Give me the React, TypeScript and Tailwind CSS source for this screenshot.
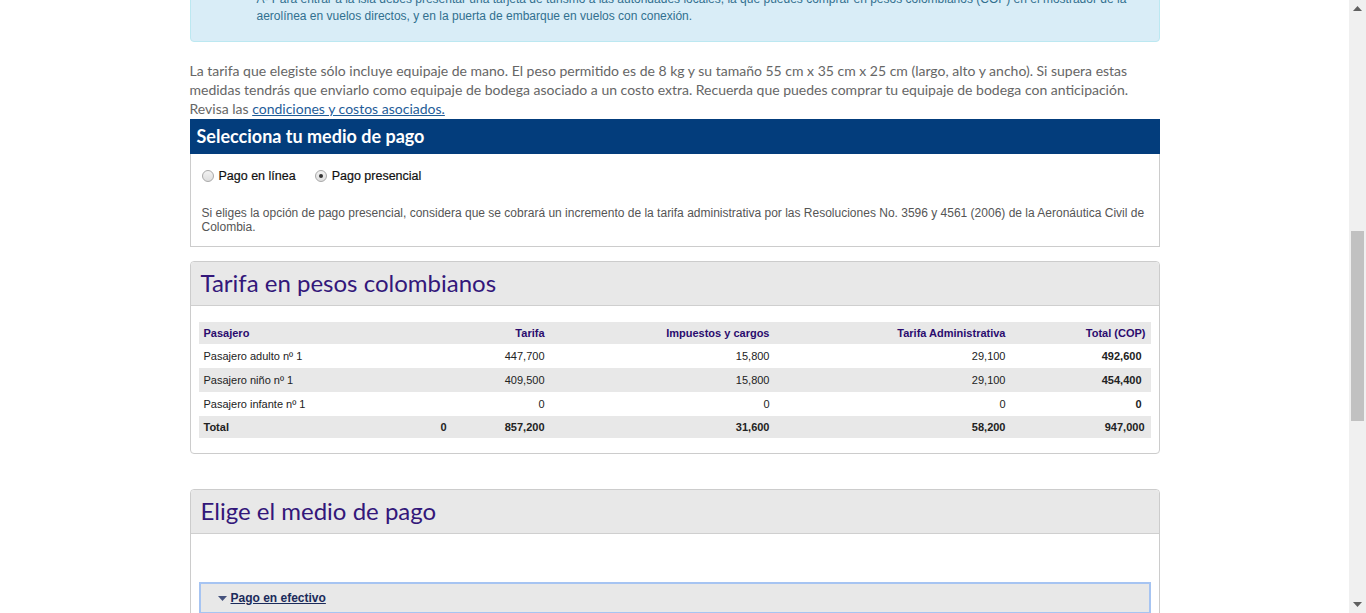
const rows = [
    { name: 'Pasajero adulto nº 1', extra: '', tarifa: '447,700', imp: '15,800', adm: '29,100', total: '492,600' },
    { name: 'Pasajero niño nº 1', extra: '', tarifa: '409,500', imp: '15,800', adm: '29,100', total: '454,400' },
    { name: 'Pasajero infante nº 1', extra: '', tarifa: '0', imp: '0', adm: '0', total: '0' },
]

function Radio({ checked, label }: { checked?: boolean; label: string }) {
    return (
        <label className="flex items-center gap-[5px]">
            <span className="w-[12px] h-[12px] rounded-full border border-[#a9a9a9] bg-gradient-to-b from-[#f2f2f2] to-[#dedede] flex items-center justify-center">
                {checked && <span className="w-[4px] h-[4px] rounded-full bg-[#333]" />}
            </span>
            <span className="text-[12.5px] text-[#111] [-webkit-text-stroke:0.2px_#111]">{label}</span>
        </label>
    )
}

function PanelHeader({ title }: { title: string }) {
    return (
        <div className="h-[44px] bg-[#e8e8e8] border-b border-[#cfcfcf] rounded-t-[4px] px-[10px] flex items-center">
            <h2 className="font-['Lato'] text-[24px] text-[#33177a] leading-none">{title}</h2>
        </div>
    )
}

export default function App() {
    return (
        <div className="flex h-[613px] overflow-hidden bg-white font-['Liberation_Sans',Arial,sans-serif]">
            <div className="flex-1 h-[613px] overflow-hidden">
                <div className="w-[970px] mx-auto">
                    {/* alert box, scrolled partly out of view */}
                    <div className="mt-[-12px] bg-[#d9edf7] border border-[#bce8f1] rounded-[4px] pl-[66px] pr-[30px] pt-[2px] pb-[16px] text-[12px] leading-[17px] text-[#31708f]">
                        A- Para entrar a la isla debes presentar una tarjeta de turismo a las autoridades locales, la que puedes comprar en pesos colombianos (COP) en el mostrador de la aerolínea en vuelos directos, y en la puerta de embarque en vuelos con conexión.
                    </div>

                    <p className="mt-[19px] font-['Lato'] text-[14px] leading-[19px] text-[#666]">
                        La tarifa que elegiste sólo incluye equipaje de mano. El peso permitido es de 8 kg y su tamaño 55 cm x 35 cm x 25 cm (largo, alto y ancho). Si supera estas medidas tendrás que enviarlo como equipaje de bodega asociado a un costo extra. Recuerda que puedes comprar tu equipaje de bodega con anticipación. Revisa las{' '}
                        <a className="underline text-[#1f5d99]">condiciones y costos asociados.</a>
                    </p>

                    {/* payment selection */}
                    <div className="mt-[1px] h-[35px] bg-[#033d7c] px-[7px] flex items-center">
                        <h3 className="font-['Lato'] font-bold text-[18px] text-white">Selecciona tu medio de pago</h3>
                    </div>
                    <div className="border border-t-0 border-[#cccccc] px-[11px] pt-[13px] pb-[12px]">
                        <div className="flex gap-[19px]">
                            <Radio label="Pago en línea" />
                            <Radio checked label="Pago presencial" />
                        </div>
                        <p className="mt-[20px] text-[12px] leading-[14px] text-[#555]">
                            Si eliges la opción de pago presencial, considera que se cobrará un incremento de la tarifa administrativa por las Resoluciones No. 3596 y 4561 (2006) de la Aeronáutica Civil de Colombia.
                        </p>
                    </div>

                    {/* fare table */}
                    <div className="mt-[14px] border border-[#cccccc] rounded-[4px]">
                        <PanelHeader title="Tarifa en pesos colombianos" />
                        <div className="px-[8px] pt-[16px] pb-[15px]">
                            <table className="w-[952px] table-fixed border-collapse text-[11px] text-[#222]">
                                <colgroup>
                                    <col className="w-[151px]" />
                                    <col className="w-[102px]" />
                                    <col className="w-[98px]" />
                                    <col className="w-[225px]" />
                                    <col className="w-[236px]" />
                                    <col className="w-[140px]" />
                                </colgroup>
                                <thead>
                                    <tr className="h-[22px] bg-[#e8e8e8] font-bold text-[#2b0c6e]">
                                        <th className="text-left px-[5px]">Pasajero</th>
                                        <th />
                                        <th className="text-right px-[5px]">Tarifa</th>
                                        <th className="text-right px-[5px]">Impuestos y cargos</th>
                                        <th className="text-right px-[5px]">Tarifa Administrativa</th>
                                        <th className="text-right px-[5px]">Total (COP)</th>
                                    </tr>
                                </thead>
                                <tbody>
                                    {rows.map((r, i) => (
                                        <tr key={r.name} className={`h-[24px] ${i % 2 === 1 ? 'bg-[#e8e8e8]' : 'bg-white'}`}>
                                            <td className="px-[5px]">{r.name}</td>
                                            <td className="px-[5px] text-right">{r.extra}</td>
                                            <td className="px-[5px] text-right">{r.tarifa}</td>
                                            <td className="px-[5px] text-right">{r.imp}</td>
                                            <td className="px-[5px] text-right">{r.adm}</td>
                                            <td className="pl-[5px] pr-[9px] text-right font-bold">{r.total}</td>
                                        </tr>
                                    ))}
                                    <tr className="h-[22px] bg-[#e8e8e8] font-bold">
                                        <td className="px-[5px]">Total</td>
                                        <td className="px-[5px] text-right">0</td>
                                        <td className="px-[5px] text-right">857,200</td>
                                        <td className="px-[5px] text-right">31,600</td>
                                        <td className="px-[5px] text-right">58,200</td>
                                        <td className="px-[6px] text-right">947,000</td>
                                    </tr>
                                </tbody>
                            </table>
                        </div>
                    </div>

                    {/* payment methods */}
                    <div className="mt-[35px] border border-[#cccccc] rounded-[4px]">
                        <PanelHeader title="Elige el medio de pago" />
                        <div className="px-[8px] pt-[48px] pb-[20px]">
                            <div className="h-[32px] border-2 border-[#a6c4f2] bg-[#e8e8e8] pl-[17px] flex items-center">
                                <svg width="9" height="5" viewBox="0 0 9 5" className="mr-[4px] mt-[1px]">
                                    <path d="M0 0H9L4.5 5Z" fill="#45527d" />
                                </svg>
                                <a className="underline font-bold text-[12px] text-[#1b2b5b]">Pago en efectivo</a>
                            </div>
                        </div>
                    </div>
                </div>
            </div>

            {/* browser scrollbar */}
            <div className="w-[17px] h-[613px] bg-[#f0f0f0] flex flex-col items-center">
                <div className="h-[17px] flex items-center justify-center">
                    <svg width="9" height="5" viewBox="0 0 9 5"><path d="M0 5L4.5 0L9 5Z" fill="#606060" /></svg>
                </div>
                <div className="mt-[214px] w-[13px] h-[190px] bg-[#c1c1c1]" />
                <div className="flex-1" />
                <div className="h-[17px] flex items-center justify-center">
                    <svg width="9" height="5" viewBox="0 0 9 5"><path d="M0 0L4.5 5L9 0Z" fill="#606060" /></svg>
                </div>
            </div>
        </div>
    )
}
